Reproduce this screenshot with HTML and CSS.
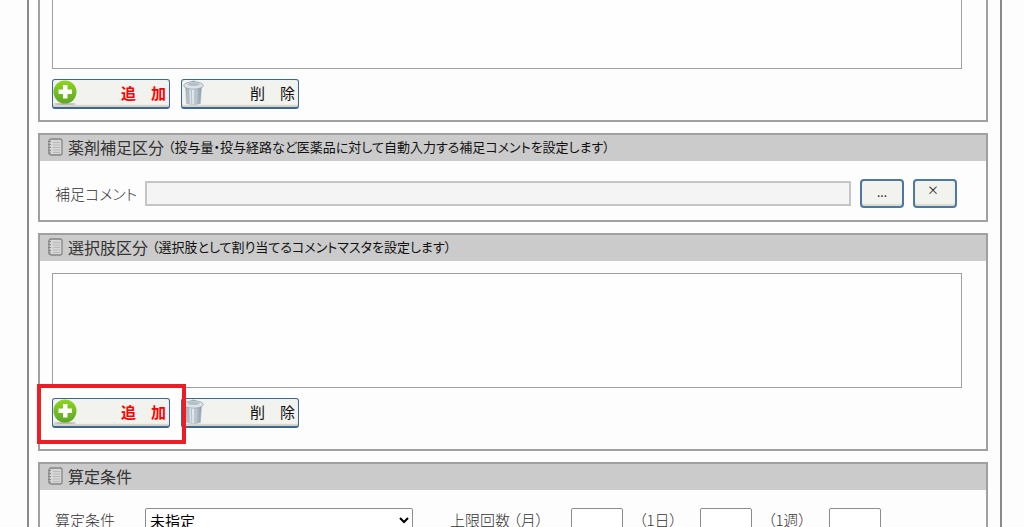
FILE: index.html
```html
<!DOCTYPE html>
<html lang="ja">
<head>
  <meta charset="UTF-8">
  <meta name="viewport" content="width=device-width, initial-scale=1.0">
  <title>コメント設定</title>
  <link rel="stylesheet" href="styles.css">
</head>
<body>
  <svg class="defs" aria-hidden="true">
    <defs>
      <linearGradient id="green" x1="0" y1="0" x2="0" y2="1">
        <stop offset="0" stop-color="#8ed61c" />
        <stop offset="1" stop-color="#5da626" />
      </linearGradient>
      <linearGradient id="metal" x1="0" y1="0" x2="1" y2="0">
        <stop offset="0" stop-color="#9aa9b5" />
        <stop offset="0.4" stop-color="#eef3f6" />
        <stop offset="1" stop-color="#8597a5" />
      </linearGradient>
    </defs>
    <symbol id="icon-add" viewBox="0 0 24 26">
      <ellipse cx="12" cy="24" rx="11" ry="1" fill="#b9b9b4" />
      <circle cx="12" cy="12" r="11.5" fill="url(#green)" />
      <path d="M10 5h4.500v4.500H19V14h-4.500v4.500H10V14H5.500V9.500H10z" fill="#fff" />
    </symbol>
    <symbol id="icon-trash" viewBox="0 0 22 26">
      <path d="M2.500 6h16l-1.200 17.500q-6.800 2.500-13.600 0z" fill="url(#metal)" stroke="#a3b0ba" stroke-width="0.6" />
      <path d="M5.500 9l.6 14M8.500 10l.3 14M12 10v14M15.500 9l-.5 14" stroke="#9fafbb" stroke-width="0.8" fill="none" />
      <path d="M8 2.500q2.500-2.600 5 0" fill="none" stroke="#9aa8b3" stroke-width="1.3" />
      <ellipse cx="10.500" cy="5.500" rx="9.800" ry="3.700" fill="#dce2e6" stroke="#94a3ae" stroke-width="0.8" />
      <ellipse cx="10.500" cy="4.300" rx="6" ry="1.800" fill="#b5c0c8" />
    </symbol>
    <symbol id="icon-note" viewBox="0 0 16 18">
      <rect x="2" y="1" width="13" height="16" rx="2" fill="#d6d6d6" stroke="#858585" stroke-width="1.3" />
      <path d="M1 3.500h3M1 6.500h3M1 9.500h3M1 12.500h3M1 15h3" stroke="#858585" />
      <path d="M6 4.500h7M6 7h7M6 9.500h7M6 12h7M6 14.500h7" stroke="#bababa" />
    </symbol>
  </svg>

  <main class="page">
    <section class="panel panel-top">
      <div class="panel-body">
        <textarea class="list list-top" aria-label="コメント一覧" readonly></textarea>
        <div class="buttons">
          <button type="button" class="btn btn-add"><svg><use href="#icon-add" /></svg>追　加</button>
          <button type="button" class="btn"><svg><use href="#icon-trash" /></svg>削　除</button>
        </div>
      </div>
    </section>

    <section class="panel">
      <h2 class="panel-title">
        <svg><use href="#icon-note" /></svg>薬剤補足区分
        <small>（投与量・投与経路など医薬品に対して自動入力する補足コメントを設定します）</small>
      </h2>
      <div class="row">
        <label class="row-label" for="comment">補足コメント</label>
        <input class="comment" id="comment" type="text" readonly>
        <button type="button" class="btn-small">...</button>
        <button type="button" class="btn-small btn-clear">×</button>
      </div>
    </section>

    <section class="panel">
      <h2 class="panel-title">
        <svg><use href="#icon-note" /></svg>選択肢区分
        <small>（選択肢として割り当てるコメントマスタを設定します）</small>
      </h2>
      <div class="panel-body panel-choices">
        <textarea class="list" aria-label="選択肢一覧" readonly></textarea>
        <div class="buttons">
          <div class="marked">
            <button type="button" class="btn btn-add"><svg><use href="#icon-add" /></svg>追　加</button>
          </div>
          <button type="button" class="btn"><svg><use href="#icon-trash" /></svg>削　除</button>
        </div>
      </div>
    </section>

    <section class="panel">
      <h2 class="panel-title"><svg><use href="#icon-note" /></svg>算定条件</h2>
      <div class="row row-limits">
        <label class="row-label" for="condition">算定条件</label>
        <select id="condition">
          <option>未指定</option>
        </select>
        <label class="month-label" for="month">上限回数 （月）</label>
        <input class="count" id="month" type="text">
        <label class="count-label" for="day">（1日）</label>
        <input class="count" id="day" type="text">
        <label class="count-label" for="week">（1週）</label>
        <input class="count" id="week" type="text">
      </div>
    </section>
  </main>
</body>
</html>
```
FILE: styles.css
```css
* {
  box-sizing: border-box;
}

body {
  height: 100vh;
  margin: 0;
  overflow: hidden;
  background-color: #fdfdfd;
  color: #333;
  font-family: "Noto Sans CJK JP", sans-serif;
  font-size: 15px;
  font-feature-settings: "palt";
}

button,
input,
select,
textarea {
  font-family: inherit;
  font-feature-settings: inherit;
}

.defs {
  position: absolute;
  width: 0;
  height: 0;
}

.page {
  display: flex;
  flex-direction: column;
  gap: 11px;
  min-height: 100vh;
  margin: 0 22px 0 27px;
  padding: 0 12px 20px 9px;
  border-left: 2px solid #8a8a8a;
  border-right: 2px solid #8a8a8a;
}

.panel {
  border: 2px solid #a0a0a0;
}

.panel-top {
  border-top: none;
}

.panel-title {
  display: flex;
  align-items: center;
  height: 26px;
  margin: 0;
  padding: 0 0 2px 7px;
  background-color: #cbcbcb;
  font-size: 16px;
  font-weight: 400;
  line-height: 24px;
  white-space: nowrap;
}

.panel-title svg {
  width: 16px;
  height: 18px;
  margin-right: 5px;
}

.panel-title small {
  margin-left: 4px;
  color: #111;
  font-size: 13px;
}

.panel-body {
  padding: 0 24px 11px 12px;
}

.panel-choices {
  padding-top: 12px;
  padding-bottom: 21px;
}

.list {
  display: block;
  width: 100%;
  height: 115px;
  border: 1px solid #a0a0a0;
  background-color: #fefefe;
  resize: none;
}

.list-top {
  height: 69px;
  border-top: none;
}

.buttons {
  display: flex;
  gap: 11px;
  margin-top: 10px;
}

.btn {
  display: flex;
  align-items: center;
  justify-content: space-between;
  width: 118px;
  height: 30px;
  padding: 0 3px 2px 0;
  border: 1px solid #3b6791;
  border-bottom-width: 2px;
  border-radius: 3px;
  background-color: #f2f2ee;
  box-shadow: inset 0 -2px 1px #d6d2c6;
  color: #111;
  font-size: 15px;
  line-height: 20px;
  font-feature-settings: normal;
  cursor: pointer;
}

.btn svg {
  width: 24px;
  height: 26px;
}

.btn-add {
  color: #f00;
  font-weight: 700;
}

.marked {
  position: relative;
}

/* red frame drawn over the add button */
.marked::after {
  content: "";
  position: absolute;
  inset: -14px -16px -16px -15px;
  border: 4px solid #ee1c25;
  pointer-events: none;
}

.row {
  display: flex;
  align-items: center;
  height: 59px;
  padding: 6px 29px 0 15px;
  color: #333;
  font-weight: 300;
  white-space: nowrap;
}

.row-label {
  flex: none;
  width: 90px;
}

.comment {
  flex: 1;
  min-width: 0;
  height: 25px;
  border: 2px solid #c4c6c6;
  background-color: #f4f4f4;
}

.btn-small {
  width: 44px;
  height: 29px;
  margin-left: 9px;
  padding: 0 0 4px;
  border: 2px solid #4f789f;
  border-radius: 4px;
  background-color: #f2f2ee;
  box-shadow: inset 0 -2px 1px #dedace;
  color: #222;
  font-size: 12px;
  cursor: pointer;
}

.btn-clear {
  padding: 0 4px 8px 0;
}

.row-limits {
  padding-top: 0;
}

.row-limits select {
  width: 268px;
  height: 24px;
  margin-right: 37px;
  padding: 0 0 2px;
  border: 1px solid #8c8c8c;
  border-radius: 2px;
  background-color: #fff;
  color: #000;
  font-size: 15px;
}

.month-label {
  width: 121px;
}

.count-label {
  width: 61px;
  margin-left: 16px;
}

.count {
  width: 52px;
  height: 24px;
  border: 1px solid #8c8c8c;
  border-radius: 2px;
  background-color: #fff;
}
```
